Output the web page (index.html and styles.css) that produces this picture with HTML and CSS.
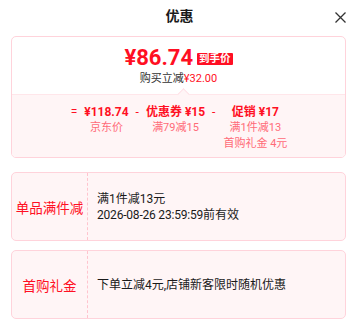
FILE: index.html
```html
<!DOCTYPE html>
<html lang="zh-CN">
<head>
    <meta charset="UTF-8">
    <meta name="viewport" content="width=device-width, initial-scale=1.0">
    <title>优惠</title>
    <link rel="stylesheet" href="styles.css">
</head>
<body>

    <div class="header">
        <h1 class="title">优惠</h1>
        <svg class="close" width="11" height="11" viewBox="0 0 11 11">
            <path d="M0.5 0.5 L10.5 10.5 M10.5 0.5 L0.5 10.5" stroke="#333" stroke-width="1.3" fill="none"/>
        </svg>
    </div>

    <div class="list">
        <div class="card summary">
            <div class="summary-top">
                <div class="price-line">
                    <span class="price">¥86.74</span>
                    <span class="badge">到手价</span>
                </div>
                <div class="save">购买立减<span class="red">¥32.00</span></div>
            </div>
            <div class="summary-bottom">
                <div class="op">=</div>
                <div class="col">
                    <div class="amount">¥118.74</div>
                    <div class="note">京东价</div>
                </div>
                <div class="op">-</div>
                <div class="col">
                    <div class="amount">优惠券 ¥15</div>
                    <div class="note">满79减15</div>
                </div>
                <div class="op">-</div>
                <div class="col wide">
                    <div class="amount">促销 ¥17</div>
                    <div class="note">满1件减13</div>
                    <div class="note">首购礼金 4元</div>
                </div>
            </div>
        </div>

        <div class="card promo first">
            <div class="promo-label">单品满件减</div>
            <div class="promo-body">
                <div>满1件减13元</div>
                <div><span class="date">2026-08-26 23:59:59</span>前有效</div>
            </div>
        </div>

        <div class="card promo">
            <div class="promo-label">首购礼金</div>
            <div class="promo-body">
                <div>下单立减4元,店铺新客限时随机优惠</div>
            </div>
        </div>
    </div>

</body>
</html>
```

FILE: styles.css
```css
body {
    margin: 0;
    font-family: Roboto, "Noto Sans CJK SC", sans-serif;
    background-color: #fff;
    color: #1a1a1a;
}
.header {
    position: relative;
    height: 32px;
    display: flex;
    align-items: center;
    justify-content: center;
    margin-bottom: 4px;
}
.title {
    margin: 0;
    font-size: 14px;
    font-weight: bold;
    line-height: 16px;
}
.close {
    position: absolute;
    right: 13px;
    top: 12px;
}
.list {
    padding: 0 13px 0 11px;
}
.card {
    border: 1px solid #ffd3db;
    border-radius: 5px;
    background-color: #fff5f6;
    box-sizing: border-box;
}
.summary {
    background-color: #fff;
}
.summary-top {
    padding: 8px 0 7px;
    text-align: center;
}
.price-line {
    display: flex;
    justify-content: center;
    align-items: center;
    height: 26px;
    color: #ff0f23;
}
.price {
    font-size: 22px;
    font-weight: bold;
    line-height: 26px;
}
.badge {
    margin-left: 4px;
    margin-top: 2px;
    padding: 0 2px;
    height: 12px;
    line-height: 12px;
    font-size: 10.5px;
    font-weight: bold;
    color: #fff;
    background-color: #ff0f23;
    border-radius: 1px;
}
.save {
    font-size: 11px;
    line-height: 16px;
    color: #333;
}
.red {
    color: #ff0f23;
}
.summary-bottom {
    position: relative;
    display: flex;
    justify-content: center;
    align-items: flex-start;
    gap: 6px;
    padding: 9px 0 5px;
    background-color: #fff5f6;
    border-top: 1px solid #ffe6ea;
    border-radius: 0 0 4px 4px;
    color: #ff0f23;
}
.summary-bottom::before {
    content: "";
    position: absolute;
    top: -5px;
    left: 167px;
    width: 8px;
    height: 8px;
    background-color: #fff5f6;
    border-top: 1px solid #ffe0e6;
    border-left: 1px solid #ffe0e6;
    transform: rotate(45deg);
}
.op {
    font-size: 12px;
    line-height: 16px;
    padding: 0 1px;
}
.col {
    text-align: center;
}
.col.wide {
    margin-left: 1px;
}
.amount {
    font-size: 12px;
    font-weight: bold;
    line-height: 16px;
}
.note {
    font-size: 11px;
    line-height: 16px;
    color: #ff6b78;
}
.promo {
    display: flex;
    height: 69px;
    margin-top: 9px;
}
.promo.first {
    margin-top: 14px;
}
.promo-label {
    width: 75px;
    flex-shrink: 0;
    display: flex;
    align-items: center;
    justify-content: center;
    border-right: 1px dashed #ffc4ce;
    font-size: 13.5px;
    color: #ff0f23;
}
.promo-body {
    display: flex;
    flex-direction: column;
    justify-content: center;
    padding-left: 9px;
    font-size: 12px;
    line-height: 16px;
}
.date {
    letter-spacing: -0.2px;
}
```
